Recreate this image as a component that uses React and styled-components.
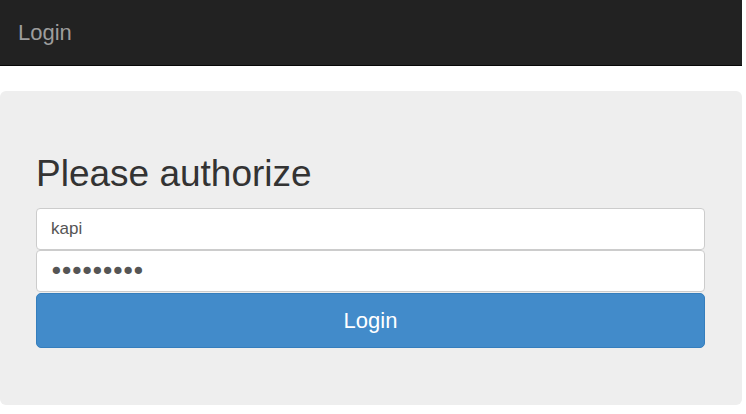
import React from "react";
import styled, { createGlobalStyle } from "styled-components";

const GlobalStyle = createGlobalStyle`
  body {
    margin: 0;
    background: #fff;
    font-family: "Liberation Sans", Arial, sans-serif;
    color: #333;
  }
`;

const Page = styled.div`
  width: 742px;
`;

const Navbar = styled.nav`
  height: 65px;
  background-color: #222;
  border-bottom: 1px solid #080808;
  display: flex;
  align-items: center;
  padding-left: 18px;
`;

const Brand = styled.span`
  color: #9d9d9d;
  font-size: 22px;
`;

const Jumbotron = styled.main`
  margin-top: 25px;
  background-color: #eee;
  border-radius: 6px;
  padding: 63px 37px 57px 36px;
`;

const Heading = styled.h1`
  margin: 0 0 14px;
  font-size: 37px;
  line-height: 40px;
  font-weight: 400;
  color: #333;
`;

const Form = styled.form`
  display: flex;
  flex-direction: column;
`;

const Input = styled.input`
  box-sizing: border-box;
  height: 42px;
  padding: 0 14px;
  border: 1px solid #ccc;
  border-radius: 4px;
  background: #fff;
  color: #555;
  font-family: "Liberation Sans", Arial, sans-serif;
  font-size: 17px;
  outline: none;

  &[type="password"] {
    padding-left: 12px;
    font-family: "DejaVu Sans", sans-serif;
    font-size: 25px;
    letter-spacing: -4.5px;
  }
`;

const Button = styled.button`
  margin-top: 1px;
  height: 55px;
  border: 1px solid #357ebd;
  border-radius: 5px;
  background-color: #428bca;
  color: #fff;
  font-family: "Liberation Sans", Arial, sans-serif;
  font-size: 22px;
  cursor: pointer;
`;

export default function App() {
  return (
    <Page>
      <GlobalStyle />
      <Navbar>
        <Brand>Login</Brand>
      </Navbar>
      <Jumbotron>
        <Heading>Please authorize</Heading>
        <Form onSubmit={(e) => e.preventDefault()}>
          <Input type="text" defaultValue="kapi" />
          <Input type="password" defaultValue="secret123" />
          <Button type="submit">Login</Button>
        </Form>
      </Jumbotron>
    </Page>
  );
}
